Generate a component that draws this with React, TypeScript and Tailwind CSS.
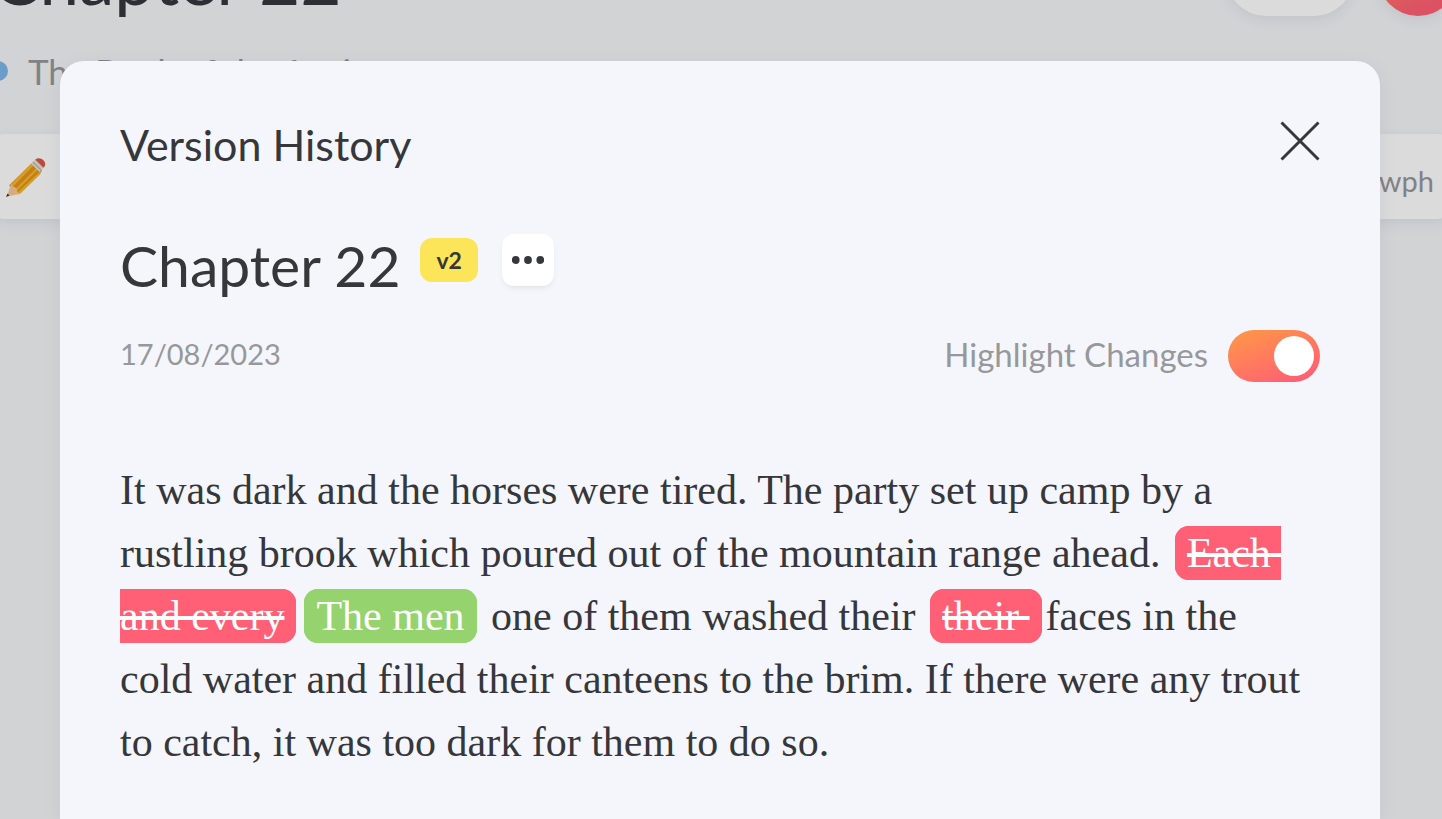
import React from 'react';

const PencilIcon: React.FC = () => (
  <svg viewBox="0 0 40 40" className="h-10 w-10" aria-hidden="true">
    <path d="M27 5l9 9L12 37.500L3 28.500z" fill="#ef8f1c" />
    <path d="M25.500 6.500l2 2L7 29.500l-2-2zM30.500 11l1.500 1.500L11 33.500l-1.500-1.500zM33.500 15l1.500 1.500L14 37l-2-2z" fill="#f0bd2c" />
    <path d="M5 27l3 3 2.500 1 .5 3 2.500 3L1 39.500z" fill="#f9c996" />
    <path d="M1.500 36.500l2 2L0 40z" fill="#33343a" />
    <path d="M25 6.500l4-4 8.500 8.500-4 4z" fill="#ece6cf" />
    <path d="M27 5l8.500 8.500M29.500 2.500l8 8" stroke="#b9b9b9" strokeWidth="1.500" />
    <path d="M29.500 2.500C34-2 43 6 37.500 10.500z" fill="#dc5548" />
  </svg>
);

const CloseIcon: React.FC = () => (
  <svg viewBox="0 0 40 40" className="h-10 w-10" fill="none" stroke="#36373b" strokeWidth="3" aria-hidden="true">
    <path d="M1.500 1.500l37 37M38.500 1.500l-37 37" />
  </svg>
);

const DotsIcon: React.FC = () => (
  <svg viewBox="0 0 32 8" className="h-2 w-8" fill="#36373b" aria-hidden="true">
    <circle cx="3.700" cy="4" r="3.900" />
    <circle cx="16" cy="4" r="3.900" />
    <circle cx="28.300" cy="4" r="3.900" />
  </svg>
);

const App: React.FC = () => {
  return (
    <div className="relative min-h-screen overflow-hidden bg-[#f4f6f8] font-['Lato',sans-serif] text-[#36373b]">
      {/* Chapter page */}
      <div className="absolute -inset-x-2 top-0">
        <div className="-mt-16 flex items-end justify-between">
          <h1 className="whitespace-nowrap text-[71px] leading-[76px]">Chapter 22</h1>
          <div className="-mr-2 flex gap-6">
            <div className="h-20 w-32 rounded-full bg-white shadow-[0_4px_14px_rgba(40,40,90,0.08)]" />
            <div className="h-20 w-20 rounded-full bg-[linear-gradient(160deg,#ff9a44,#ff6075_80%)] shadow-[0_4px_14px_rgba(40,40,90,0.08)]" />
          </div>
        </div>
        <div className="mt-[35px] flex items-center gap-5 text-[35px] leading-10 text-[#97989c]">
          <span className="h-5 w-4 rounded-r-full bg-[#7cb9ea]" />
          <span>The Book of the Ancients</span>
        </div>
        <div className="mt-[43px] flex h-[85px] items-center justify-between rounded-xl bg-white pl-[14px] pr-4 shadow-[0_4px_14px_rgba(40,40,90,0.08)]">
          <PencilIcon />
          <span className="pt-2 text-[29px] leading-8 text-[#97989c]">0 wph</span>
        </div>
      </div>

      {/* Modal */}
      <div className="relative flex min-h-screen bg-black/14 pl-[60px] pr-[62px] pt-[61px]">
        <section className="flex-1 rounded-t-3xl bg-[#f5f6fb] px-[60px] pt-[60px] shadow-[0_4px_20px_rgba(40,40,90,0.06)]" role="dialog" aria-labelledby="dialog-title">
          <header className="flex items-start justify-between">
            <h2 id="dialog-title" className="text-[43px] leading-[48px]">Version History</h2>
            <button type="button" aria-label="Close">
              <CloseIcon />
            </button>
          </header>

          <div className="mt-[61px] flex items-start">
            <h3 className="text-[57px] leading-[70px]">Chapter 22</h3>
            <span className="ml-5 mt-2 rounded-xl bg-[#fce559] px-4 py-[7px] text-[23px] font-bold leading-[30px]">v2</span>
            <button type="button" aria-label="More options" className="ml-6 mt-1 flex h-[52px] w-[52px] items-center justify-center rounded-xl bg-white shadow-md shadow-black/5">
              <DotsIcon />
            </button>
          </div>

          <div className="mt-[30px] flex items-center justify-between leading-10 text-[#97989c]">
            <time dateTime="2023-08-17" className="pb-1 text-[29px]">17/08/2023</time>
            <label className="flex items-center gap-5 text-[33px]">
              <span className="pb-1">Highlight Changes</span>
              <input type="checkbox" role="switch" defaultChecked className="peer sr-only" />
              <span className="flex h-[52px] w-[92px] items-center justify-start rounded-full bg-gray-300 p-[6px] peer-checked:justify-end peer-checked:bg-[linear-gradient(160deg,#ff9a44,#ff6075_90%)]">
                <span className="h-10 w-10 rounded-full bg-white" />
              </span>
            </label>
          </div>

          <p className="mt-[77px] pr-2 font-['Liberation_Serif',serif] text-[42px] leading-[63px]">
            It was dark and the horses were tired. The party set up camp by a rustling brook which poured out of the mountain range ahead.{' '}
            <del className="mx-1 whitespace-pre-wrap rounded-[14px] border-x-[6px] border-y-4 border-[#ff6075] bg-[#ff6075] px-[6px] text-white decoration-4">Each and every</del>
            <ins className="mx-1 rounded-[14px] border-x-[6px] border-y-4 border-[#95d36e] bg-[#95d36e] px-[6px] text-white no-underline">The men</ins>{' '}
            one of them washed their{' '}
            <del className="mx-1 whitespace-pre-wrap rounded-[14px] border-x-[6px] border-y-4 border-[#ff6075] bg-[#ff6075] px-[6px] text-white decoration-4">their </del>
            faces in the cold water and filled their canteens to the brim. If there were any trout to catch, it was too dark for them to do so.
          </p>
        </section>
      </div>
    </div>
  );
};

export default App;
